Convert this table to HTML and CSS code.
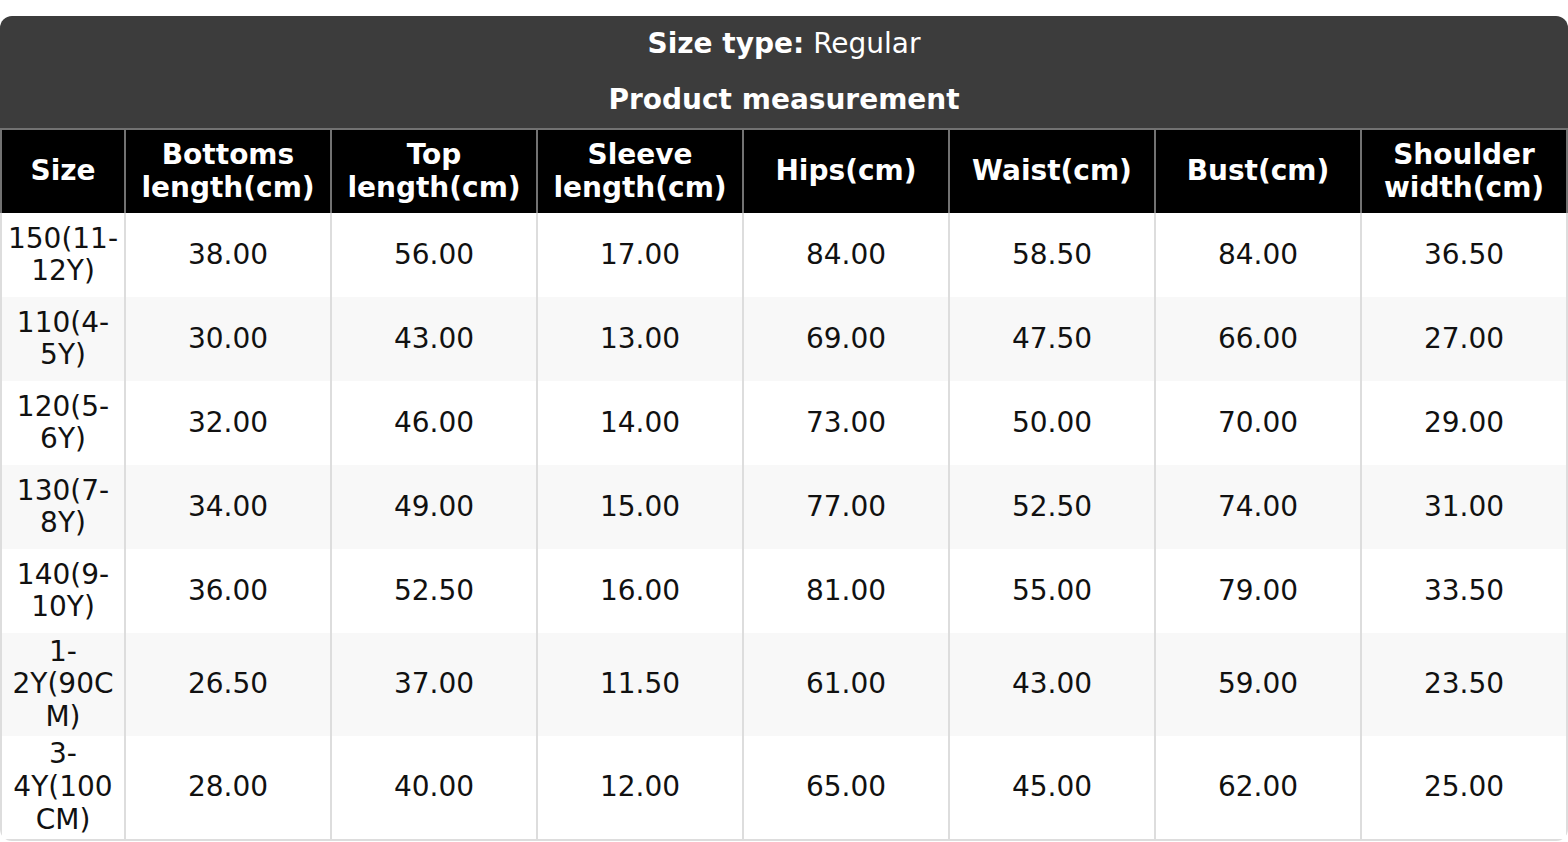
FILE: index.html
```html
<!DOCTYPE html>
<html lang="en">
<head>
<meta charset="utf-8">
<title>Size chart</title>
<link rel="stylesheet" href="styles.css">
</head>
<body>
<div class="chart">
  <table class="size-table">
    <colgroup>
      <col class="col-size">
      <col class="col-mid"><col class="col-mid"><col class="col-mid"><col class="col-mid"><col class="col-mid"><col class="col-mid">
      <col class="col-last">
    </colgroup>
    <thead>
      <tr><th class="title" colspan="8"><b>Size type:</b> Regular</th></tr>
      <tr><th class="title" colspan="8"><b>Product measurement</b></th></tr>
      <tr class="head">
        <th>Size</th>
        <th>Bottoms length(cm)</th>
        <th>Top length(cm)</th>
        <th>Sleeve length(cm)</th>
        <th>Hips(cm)</th>
        <th>Waist(cm)</th>
        <th>Bust(cm)</th>
        <th>Shoulder width(cm)</th>
      </tr>
    </thead>
    <tbody>
      <tr><td>150(11-12Y)</td><td>38.00</td><td>56.00</td><td>17.00</td><td>84.00</td><td>58.50</td><td>84.00</td><td>36.50</td></tr>
      <tr><td>110(4-5Y)</td><td>30.00</td><td>43.00</td><td>13.00</td><td>69.00</td><td>47.50</td><td>66.00</td><td>27.00</td></tr>
      <tr><td>120(5-6Y)</td><td>32.00</td><td>46.00</td><td>14.00</td><td>73.00</td><td>50.00</td><td>70.00</td><td>29.00</td></tr>
      <tr><td>130(7-8Y)</td><td>34.00</td><td>49.00</td><td>15.00</td><td>77.00</td><td>52.50</td><td>74.00</td><td>31.00</td></tr>
      <tr><td>140(9-10Y)</td><td>36.00</td><td>52.50</td><td>16.00</td><td>81.00</td><td>55.00</td><td>79.00</td><td>33.50</td></tr>
      <tr><td>1-2Y(90CM)</td><td>26.50</td><td>37.00</td><td>11.50</td><td>61.00</td><td>43.00</td><td>59.00</td><td>23.50</td></tr>
      <tr><td>3-4Y(100CM)</td><td>28.00</td><td>40.00</td><td>12.00</td><td>65.00</td><td>45.00</td><td>62.00</td><td>25.00</td></tr>
    </tbody>
  </table>
</div>
</body>
</html>
```

FILE: styles.css
```css
html, body {
  margin: 0;
  padding: 0;
  background: #ffffff;
}

body {
  padding-top: 16px;
  font-family: "DejaVu Sans", "Liberation Sans", sans-serif;
  font-size: 28px;
  line-height: 32.6px;
  color: #111111;
}

.chart {
  width: 1568px;
  border-radius: 12px;
  overflow: hidden;
}

.size-table {
  width: 1568px;
  table-layout: fixed;
  border-collapse: separate;
  border-spacing: 0;
}

.col-size { width: 124px; }
.col-mid { width: 206px; }
.col-last { width: 208px; }

.title {
  background: #3c3c3c;
  color: #ffffff;
  font-weight: normal;
  text-align: center;
  padding: 11.7px 0;
}

.title b {
  font-weight: bold;
}

.head th {
  background: #000000;
  color: #ffffff;
  font-weight: bold;
  text-align: center;
  vertical-align: middle;
  padding: 9px 4px;
  border-top: 2px solid #727272;
  border-left: 2px solid #727272;
}

.head th:last-child {
  border-right: 2px solid #727272;
}

tbody tr {
  height: 84px;
}

tbody tr:nth-child(even) td {
  background: #f8f8f8;
}

tbody td {
  background: #ffffff;
  text-align: center;
  vertical-align: middle;
  padding: 2.5px 4px;
  border-left: 2px solid #dddddd;
  overflow-wrap: anywhere;
}

tbody td:last-child {
  border-right: 2px solid #dddddd;
}

tbody tr:last-child td {
  border-bottom: 2px solid #dddddd;
}
```
